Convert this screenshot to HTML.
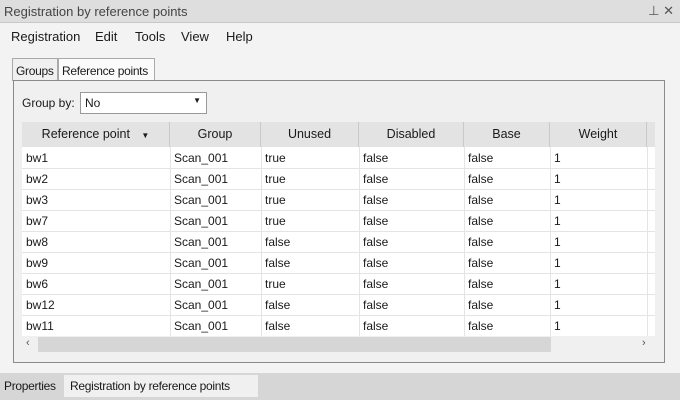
<!DOCTYPE html>
<html><head><style>
*{margin:0;padding:0;box-sizing:border-box}
body{width:680px;height:400px;background:#f3f3f3;font-family:"Liberation Sans",sans-serif;font-size:12px;color:#1a1a1a;position:relative;overflow:hidden;white-space:nowrap}
.a{position:absolute}
.title{left:0;top:0;width:680px;height:23px;background:#dedede;border-bottom:1px solid #c8c8c8;color:#444;font-size:13px;padding:4px 4px}
.menu span{position:absolute;top:29px;font-size:13px}
.panel{left:13px;top:80px;width:652px;height:283px;border:1px solid #8a8a8a;background:#f0f0f0}
.cell{position:absolute;height:21px;line-height:21px;padding-left:4px;white-space:nowrap}
.hdr{position:absolute;top:122px;height:25px;line-height:25px;text-align:center;background:#e3e3e3;border-right:1px solid #c9c9c9;font-size:12.5px}
</style></head><body>
<div class="a title">Registration by reference points<span style="position:absolute;right:6px;top:3px;color:#555">⊥ ✕</span></div>
<div class="menu"><span style="left:11px">Registration</span><span style="left:95px">Edit</span><span style="left:135px">Tools</span><span style="left:181px">View</span><span style="left:226px">Help</span></div>
<div class="a" style="left:12px;top:58px;width:46px;height:23px;border:1px solid #aaa;border-bottom:none;background:#f0f0f0;padding:5px 3px;letter-spacing:-0.3px">Groups</div>
<div class="a" style="left:58px;top:58px;width:97px;height:23px;border:1px solid #aaa;border-bottom:1px solid #3aa0d8;background:#fbfbfb;padding:5px 3px;letter-spacing:-0.3px">Reference points</div>
<div class="a panel"></div>
<div class="a" style="left:22px;top:96px">Group by:</div>
<div class="a" style="left:80px;top:92px;width:127px;height:22px;border:1px solid #999;background:#fff;padding:3px 4px">No<span style="position:absolute;right:5px;top:3px;font-size:8px">▼</span></div>
<div class="a" style="left:22px;top:122px;width:633px;height:231px;background:#fff"></div>
<div class="hdr" style="left:22px;width:148px">Reference point <span style="font-size:8px;margin-left:8px">▼</span></div>
<div class="hdr" style="left:170px;width:91px">Group</div>
<div class="hdr" style="left:261px;width:98px">Unused</div>
<div class="hdr" style="left:359px;width:105px">Disabled</div>
<div class="hdr" style="left:464px;width:86px">Base</div>
<div class="hdr" style="left:550px;width:97px">Weight</div>
<div class="hdr" style="left:647px;width:8px;border:none"></div>
<div id="rows"></div>
<div class="a" style="left:22px;top:336px;width:633px;height:17px;background:#f0f0f0"></div>
<div class="a" style="left:38px;top:337px;width:513px;height:15px;background:#d6d6d6"></div>
<div class="a" style="left:26px;top:337px;font-size:11px;color:#555">‹</div>
<div class="a" style="left:642px;top:337px;font-size:11px;color:#555">›</div>
<div class="a" style="left:0;top:373px;width:680px;height:27px;background:#d6d6d6"></div>
<div class="a" style="left:0;top:375px;width:64px;height:22px;padding:4px 4px;font-size:12px;letter-spacing:-0.3px">Properties</div>
<div class="a" style="left:64px;top:375px;width:194px;height:22px;background:#f0f0f0;padding:4px 6px;font-size:12px;letter-spacing:-0.3px">Registration by reference points</div>
<script>
var d=[["bw1","true"],["bw2","true"],["bw3","true"],["bw7","true"],["bw8","false"],["bw9","false"],["bw6","true"],["bw12","false"],["bw11","false"]];
var h="";d.forEach(function(r,i){var t=148+i*21;
h+='<div class="a" style="left:22px;top:'+(t+20)+'px;width:633px;height:1px;background:#e4e4e4"></div>';
[[22,r[0]],[170,"Scan_001"],[261,r[1]],[359,"false"],[464,"false"],[550,"1"]].forEach(function(c){h+='<div class="cell" style="left:'+c[0]+'px;top:'+t+'px">'+c[1]+'</div>'});});
[170,261,359,464,550,647].forEach(function(x){h+='<div class="a" style="left:'+x+'px;top:147px;width:1px;height:189px;background:#e4e4e4"></div>'});
document.getElementById("rows").innerHTML=h;
</script>
</body></html>
